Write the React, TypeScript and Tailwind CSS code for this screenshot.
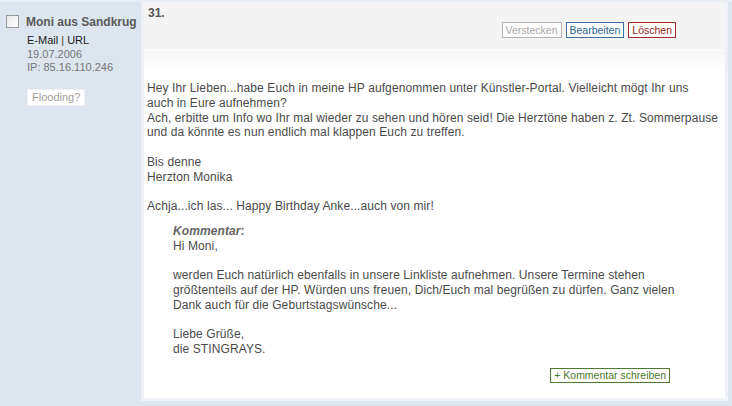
export default function App() {
  return (
    <div className="flex h-[406px] w-[732px] flex-col bg-[#dde5ef] font-['Liberation_Sans',Arial,sans-serif] text-[12px] text-[#4a4a4a]">
      <div className="h-[2px] bg-[#e9eef5]" />
      <div className="flex flex-1 pb-[5px]">
        <aside className="w-[140px] shrink-0 pl-[6px] pt-[12px]">
          <div className="flex items-start gap-[7px]">
            <span className="mt-[1px] block h-[13px] w-[13px] border border-[#9a9a9a] bg-gradient-to-br from-[#e8e8e8] to-white" />
            <span className="text-[12px] font-bold leading-[16px] text-[#5a5a5a]">Moni aus Sandkrug</span>
          </div>
          <div className="mt-[4px] pl-[21px] text-[11px] leading-[13.5px]">
            <div className="text-[#222]">
              E-Mail <span className="text-[#444]">|</span> URL
            </div>
            <div className="text-[#777]">19.07.2006</div>
            <div className="text-[#777]">IP: 85.16.110.246</div>
            <div className="mt-[14px] inline-block border border-[#f0f0f0] bg-white px-[4px] py-[1px] text-[11px] leading-[13px] text-[#a0a0a0]">
              Flooding?
            </div>
          </div>
        </aside>
        <main className="ml-[1px] flex w-[587px] flex-col border-x-[3px] border-b-[3px] border-[#eef1f6] bg-white">
          <header className="flex h-[47px] flex-col bg-[#f4f4f4] pl-[4px] pr-[49px] pt-[3px]">
            <div className="text-[12px] font-bold leading-[16px] text-[#555]">31.</div>
            <div className="mt-[1px] flex justify-end gap-[4px] text-[10.5px] leading-[14px]">
              <span className="border border-[#b4b4b4] bg-white px-[3px] text-[#a8a8a8]">Verstecken</span>
              <span className="border border-[#3b6fa3] bg-white px-[3px] text-[#2d5f93]">Bearbeiten</span>
              <span className="border border-[#a52a2a] bg-white px-[3px] text-[#9b1c1c]">Löschen</span>
            </div>
          </header>
          <div className="h-[2px] bg-[#fbfbfb]" />
          <section className="flex flex-1 flex-col bg-gradient-to-b from-[#f7f7f7] to-white to-[20px] pl-[3px] pr-[4px] pt-[30px] leading-[14.75px] tracking-[0.1px] whitespace-nowrap">
            <p>
              Hey Ihr Lieben...habe Euch in meine HP aufgenommen unter Künstler-Portal. Vielleicht mögt Ihr uns
              <br />
              auch in Eure aufnehmen?
              <br />
              Ach, erbitte um Info wo Ihr mal wieder zu sehen und hören seid! Die Herztöne haben z. Zt. Sommerpause
              <br />
              und da könnte es nun endlich mal klappen Euch zu treffen.
            </p>
            <p className="mt-[14.75px]">
              Bis denne
              <br />
              Herzton Monika
            </p>
            <p className="mt-[14.75px]">Achja...ich las... Happy Birthday Anke...auch von mir!</p>
            <div className="mt-[10px] pl-[26px]">
              <div className="font-bold italic text-[#666]">
                Kommentar<span className="not-italic">:</span>
              </div>
              <p>Hi Moni,</p>
              <p className="mt-[14.75px]">
                werden Euch natürlich ebenfalls in unsere Linkliste aufnehmen. Unsere Termine stehen
                <br />
                größtenteils auf der HP. Würden uns freuen, Dich/Euch mal begrüßen zu dürfen. Ganz vielen
                <br />
                Dank auch für die Geburtstagswünsche...
              </p>
              <p className="mt-[14.75px]">
                Liebe Grüße,
                <br />
                die STINGRAYS.
              </p>
            </div>
            <div className="mt-[11px] flex justify-end pr-[51px] tracking-normal">
              <span className="border border-[#4d7a2e] bg-white px-[3px] text-[10.5px] leading-[13px] text-[#4d7a2e]">
                + Kommentar schreiben
              </span>
            </div>
          </section>
        </main>
      </div>
    </div>
  );
}
